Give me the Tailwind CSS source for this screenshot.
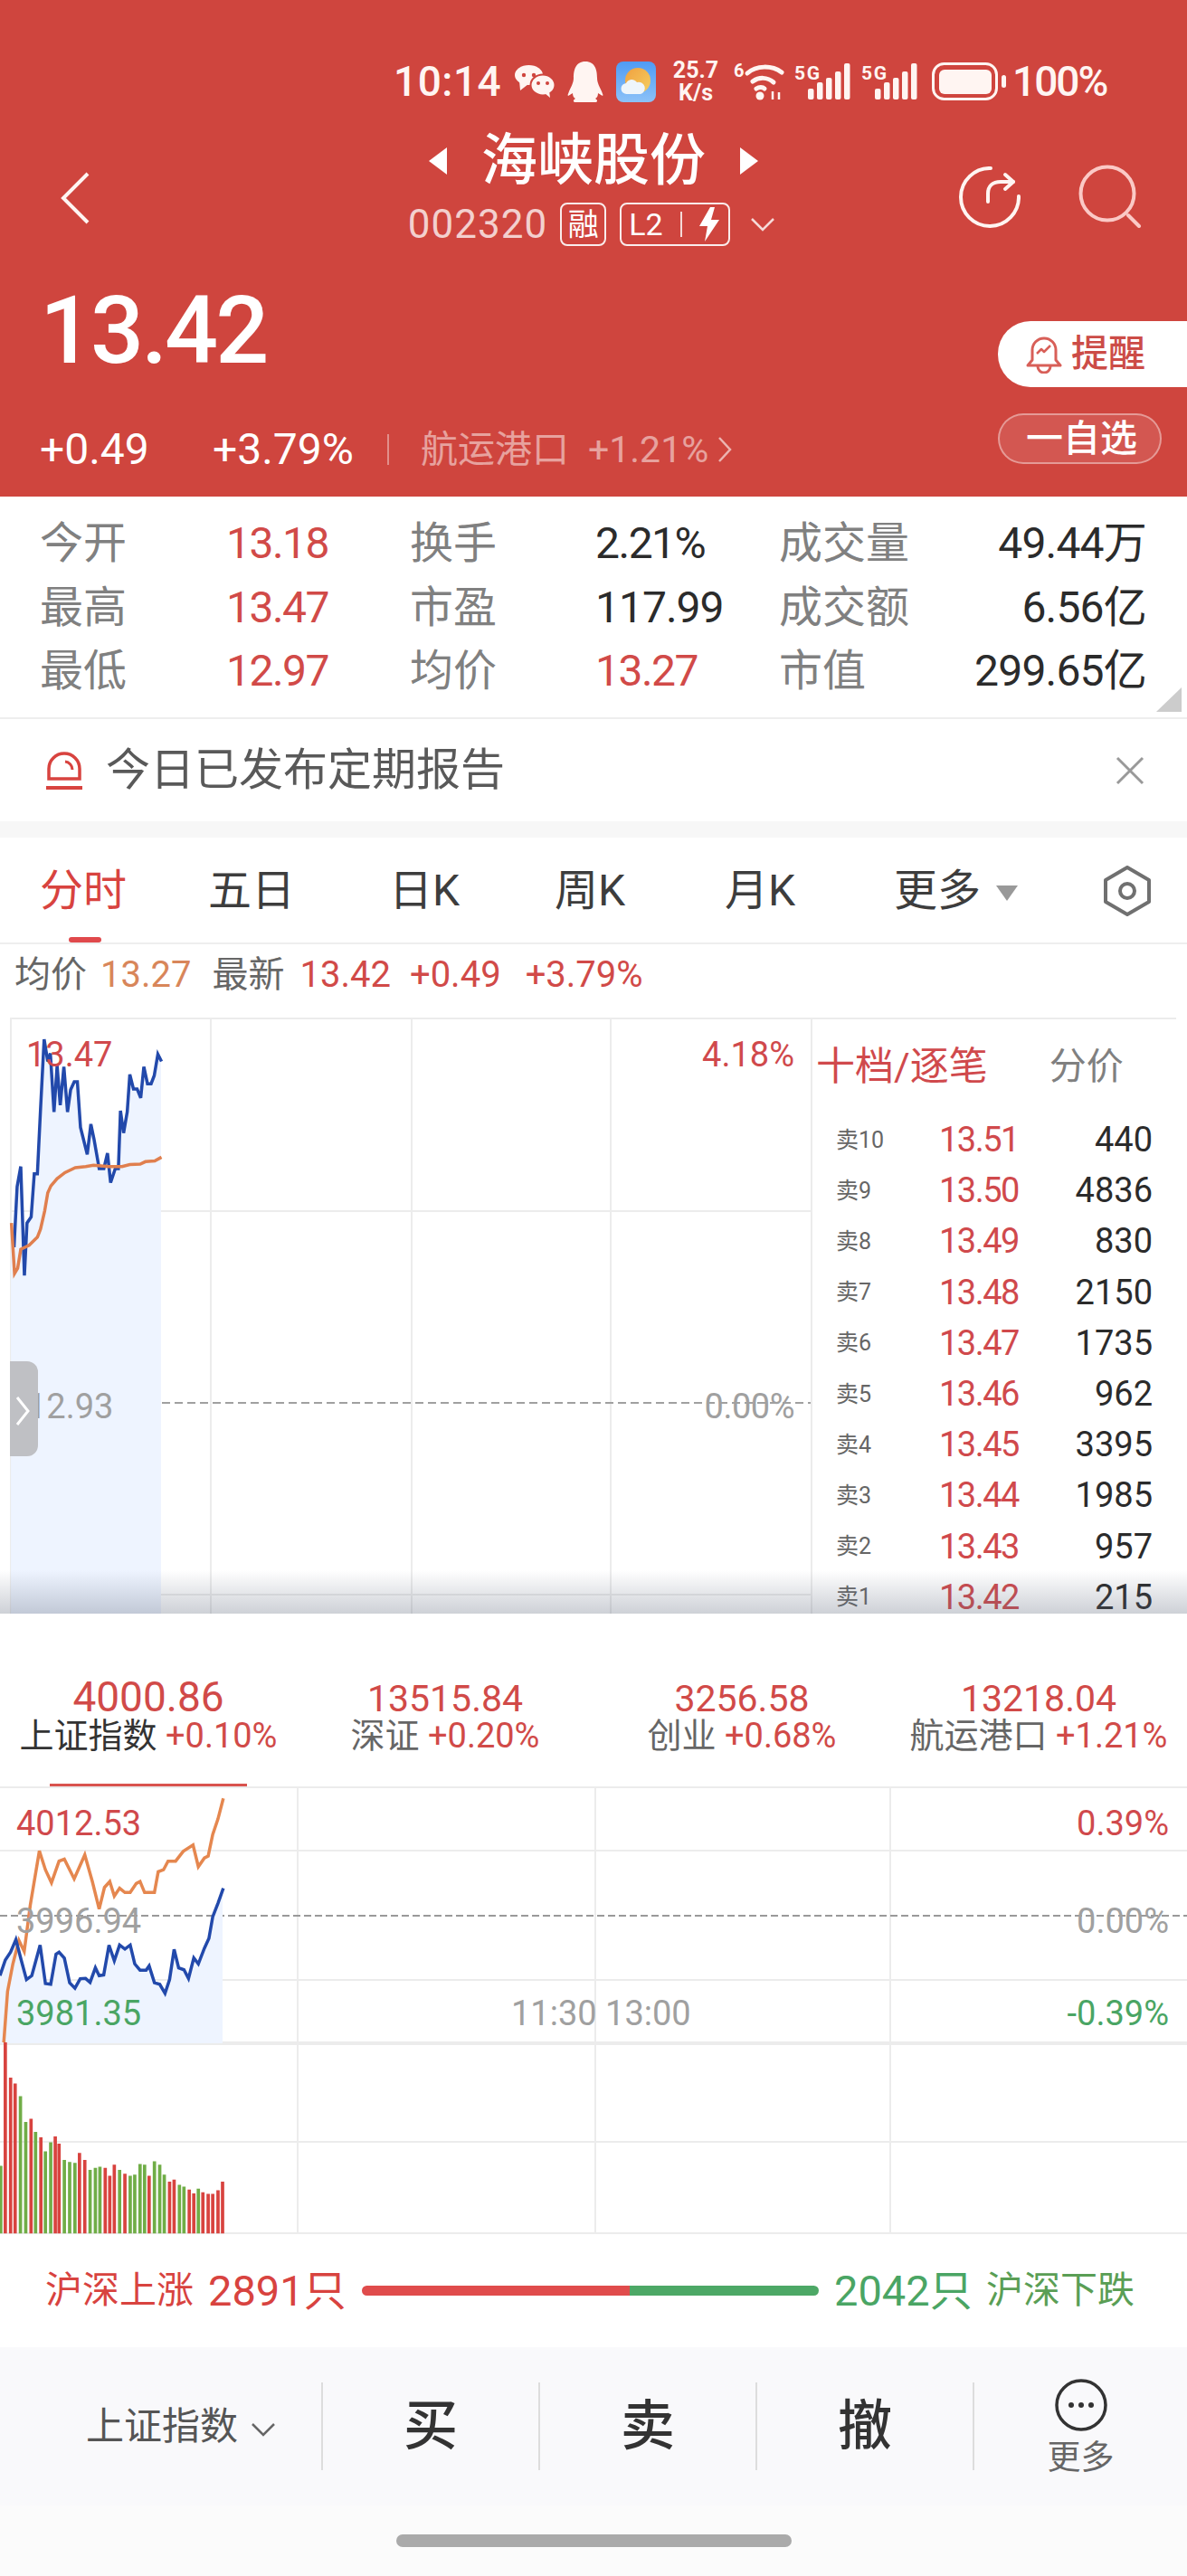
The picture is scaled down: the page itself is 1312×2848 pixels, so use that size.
<!DOCTYPE html>
<html lang="zh-CN">
<head>
    <meta charset="UTF-8">
    <title>海峡股份</title>
    <script src="https://cdn.jsdelivr.net/npm/@tailwindcss/browser@4"></script>
</head>
<body class="w-[1312px] h-[2848px] overflow-hidden bg-white font-['Roboto','Noto_Sans_CJK_SC',sans-serif]">

<!-- red header -->
<header class="h-[549px] pt-[66px] bg-[#cf453e] text-white">
    <div class="flex items-center h-[48px] pl-[435px] text-[#fff5f2]">
        <span class="w-[134px] text-[46px] leading-none font-medium tracking-[0.5px]">10:14</span>
        <svg class="w-[44px] h-[36px]" viewBox="0 0 44 36"><ellipse cx="15.5" cy="11" rx="15.5" ry="11" fill="#fff5f2"/><path d="M5 17l1 11 9-7z" fill="#fff5f2"/><ellipse cx="31" cy="22" rx="13.5" ry="11.5" fill="#fff5f2" stroke="#cf453e" stroke-width="2"/><path d="M33 31l6 5-1-8z" fill="#fff5f2"/><circle cx="10" cy="11" r="2.2" fill="#cf453e"/><circle cx="21" cy="11" r="2.2" fill="#cf453e"/><circle cx="26" cy="20" r="2" fill="#cf453e"/><circle cx="36" cy="20" r="2" fill="#cf453e"/></svg>
        <svg class="ml-[14px] w-[40px] h-[45px]" viewBox="0 0 40 45"><path d="M20 0C9 0 7 10 7 18c0 6-3 10-5 15-1 3-2 4-1 5l5-3c0 3 1 5 3 6-2 1-3 3-1 4h24c2-1 1-3-1-4 2-1 3-3 3-6l5 3c1-1 0-2-1-5-2-5-5-9-5-15C33 10 31 0 20 0z" fill="#fff5f2"/></svg>
        <svg class="ml-[14px] w-[44px] h-[45px]" viewBox="0 0 44 45">
            <defs>
                <linearGradient id="sky" x1="0" y1="0" x2="0" y2="1"><stop offset="0" stop-color="#4f9bf5"/><stop offset="1" stop-color="#8cc2f8"/></linearGradient>
                <linearGradient id="sun" x1="0" y1="0" x2="1" y2="1"><stop offset="0" stop-color="#f0a040"/><stop offset="1" stop-color="#f5cf60"/></linearGradient>
            </defs>
            <rect width="44" height="45" rx="8" fill="url(#sky)"/>
            <circle cx="24" cy="21" r="14" fill="url(#sun)"/>
            <path d="M12 36a6 6 0 0 1-1-12 7 7 0 0 1 12-1 6 6 0 0 1 4 13z" fill="#eef5fb"/>
        </svg>
        <div class="ml-[15px] w-[58px] flex flex-col items-center text-[25px] leading-[25px] font-bold"><span>25.7</span><span>K/s</span></div>
        <svg class="ml-[13px] w-[57px] h-[52px]" viewBox="0 -4 57 52" fill="none" stroke="#fff5f2" stroke-width="5" stroke-linecap="round"><path d="M15 13c10-9 27-9 38-1"/><path d="M21 22c7-5 16-5 23 1"/><path d="M25 30c3-2 7-2 9 0"/><circle cx="29" cy="38" r="4.5" fill="#fff5f2" stroke="none"/><path d="M43 42V33M50 34V42" stroke-width="2.5" stroke-linecap="butt"/><text x="0" y="17" font-size="20" font-weight="700" fill="#fff5f2" stroke="none">6</text></svg>
        <svg class="ml-[10px] w-[64px] h-[42px]" viewBox="0 0 64 42" fill="#fff5f2"><text x="0" y="19" font-size="21" font-weight="700" textLength="28">5G</text><rect x="15" y="29" width="6.5" height="12" rx="2"/><rect x="25" y="22" width="6.5" height="19" rx="2"/><rect x="35" y="17" width="6.5" height="24" rx="2"/><rect x="45" y="10" width="6.5" height="31" rx="2"/><rect x="55" y="1" width="6.5" height="40" rx="2"/></svg>
        <svg class="ml-[10px] w-[64px] h-[42px]" viewBox="0 0 64 42" fill="#fff5f2"><text x="0" y="19" font-size="21" font-weight="700" textLength="28">5G</text><rect x="15" y="29" width="6.5" height="12" rx="2"/><rect x="25" y="22" width="6.5" height="19" rx="2"/><rect x="35" y="17" width="6.5" height="24" rx="2"/><rect x="45" y="10" width="6.5" height="31" rx="2"/><rect x="55" y="1" width="6.5" height="40" rx="2"/></svg>
        <svg class="ml-[14px] w-[83px] h-[42px]" viewBox="0 0 83 42"><rect x="1.5" y="1.5" width="70" height="39" rx="12" fill="none" stroke="#fff5f2" stroke-width="3"/><rect x="8" y="8" width="58" height="27" rx="6" fill="#fff5f2"/><rect x="77" y="14" width="5" height="14" rx="2.5" fill="#fff5f2"/></svg>
        <span class="ml-[6px] text-[46px] leading-none font-medium tracking-[-2px]">100%</span>
    </div>

    <div class="grid grid-cols-[1fr_auto_1fr] mt-[32px]">
        <div class="pl-[66px] pt-[44px]">
            <svg class="w-[34px] h-[58px]" viewBox="0 0 34 58" fill="none" stroke="#fff5f2" stroke-width="4"><path d="M31 2L4 29l27 27"/></svg>
        </div>
        <div class="flex flex-col items-center">
            <div class="flex items-center h-[62px] gap-[38px] mt-[1px]">
                <span class="w-0 h-0 border-y-[15px] border-y-transparent border-r-[20px] border-r-white"></span>
                <span class="text-[62px] leading-none font-medium">海峡股份</span>
                <span class="w-0 h-0 border-y-[15px] border-y-transparent border-l-[20px] border-l-white"></span>
            </div>
            <div class="flex items-center h-[48px] mt-[15px] ml-[-4px]">
                <span class="text-[44px] leading-none tracking-[1px] text-white/75">002320</span>
                <span class="ml-[14px] w-[51px] h-[48px] flex items-center justify-center rounded-[8px] border-2 border-white/90 text-[34px] leading-none">融</span>
                <span class="ml-[15px] w-[122px] h-[48px] flex items-center rounded-[8px] border-2 border-white/90 pl-[8px]">
                    <span class="text-[34px] leading-none">L2</span>
                    <span class="ml-[19px] w-[2px] h-[28px] bg-white/80"></span>
                    <svg class="ml-[17px] w-[26px] h-[38px]" viewBox="0 0 26 38"><path d="M14 0L2 21h9L8 38l16-24h-9l4-14z" fill="#fff"/></svg>
                </span>
                <svg class="ml-[22px] w-[28px] h-[16px]" viewBox="0 0 28 16" fill="none" stroke="#fff" stroke-opacity=".8" stroke-width="2.5"><path d="M2 2l12 12L26 2"/></svg>
            </div>
        </div>
        <div class="flex justify-end gap-[62px] pr-[50px] pt-[38px]">
            <svg class="w-[68px] h-[68px]" viewBox="0 0 68 68" fill="none" stroke="#fff5f2" stroke-width="4" stroke-linecap="round" stroke-linejoin="round"><path d="M35 2A32 32 0 1 0 66 33"/><path d="M32 39v-9c0-8 5-13 14-13h14"/><path d="M51 9l9 8-9 8"/></svg>
            <svg class="w-[72px] h-[72px] -mt-[4px]" viewBox="0 0 72 72" fill="none" stroke="#fbc9c6" stroke-width="4" stroke-linecap="round"><circle cx="34" cy="34" r="29.5"/><path d="M57 58l12 12"/></svg>
        </div>
    </div>

    <div class="flex justify-between mt-[39px]">
        <div class="pl-[44px]">
            <div class="text-[104px] leading-[110px] tracking-[-3px] font-medium">13.42</div>
            <div class="flex items-center h-[46px] mt-[53px] leading-none">
                <span class="w-[191px] text-[48px]">+0.49</span>
                <span class="w-[193px] text-[48px]">+3.79%</span>
                <span class="w-[2px] h-[34px] bg-white/40"></span>
                <span class="ml-[35px] text-[41px] text-white/50">航运港口</span>
                <span class="ml-[21px] text-[41px] text-white/50">+1.21%</span>
                <svg class="ml-[10px] w-[16px] h-[30px]" viewBox="0 0 16 30" fill="none" stroke="#fff" stroke-opacity=".6" stroke-width="2.5"><path d="M2 2l12 13L2 28"/></svg>
            </div>
        </div>
        <div class="flex flex-col items-end pt-[44px]">
            <div class="flex items-center w-[209px] h-[73px] rounded-l-[36px] bg-white pl-[31px] text-[#cc4c47]">
                <svg class="w-[40px] h-[42px]" viewBox="0 0 40 42" fill="none" stroke="#d85f58" stroke-width="3" stroke-linejoin="round"><path d="M7 27V16a13 13 0 0 1 26 0v11l5 6H2z"/><path d="M13 34a7 7 0 0 0 14 0"/><path d="M12 20l5-5 3 3 7-7" stroke-width="2.5"/></svg>
                <span class="ml-[10px] text-[41px] leading-none font-medium">提醒</span>
            </div>
            <div class="flex items-center w-[181px] h-[56px] mt-[29px] mr-[28px] pl-[29px] rounded-full border-2 border-white/40 bg-white/10 text-[41px] leading-none font-medium whitespace-nowrap">一自选</div>
        </div>
    </div>
</header>

<!-- quote stats -->
<section class="relative h-[246px] pt-[17px] pl-[44px] pr-[45px] border-b-2 border-[#eeeeee] leading-none">
    <div class="grid grid-cols-[206px_203px_205px_203px_1fr_auto] auto-rows-[70.5px] items-center text-[48px] text-[#808080]">
        <span>今开</span><span class="text-[#d14a48] tracking-[-1.5px]">13.18</span><span>换手</span><span class="text-[#2b2b2b] tracking-[-1.5px]">2.21%</span><span>成交量</span><span class="text-right text-[#2b2b2b] tracking-[-0.8px]">49.44万</span>
        <span>最高</span><span class="text-[#d14a48] tracking-[-1.5px]">13.47</span><span>市盈</span><span class="text-[#2b2b2b] tracking-[-1px]">117.99</span><span>成交额</span><span class="text-right text-[#2b2b2b] tracking-[-0.8px]">6.56亿</span>
        <span>最低</span><span class="text-[#d14a48] tracking-[-1.5px]">12.97</span><span>均价</span><span class="text-[#d14a48] tracking-[-1.5px]">13.27</span><span>市值</span><span class="text-right text-[#2b2b2b] tracking-[-0.8px]">299.65亿</span>
    </div>
    <span class="absolute right-[6px] bottom-[6px] w-0 h-0 border-l-[28px] border-l-transparent border-b-[27px] border-b-[#cccccc]"></span>
</section>

<!-- notice -->
<section class="flex items-center justify-between h-[113px] pl-[50px] pr-[47px]">
    <div class="flex items-center">
        <svg class="w-[42px] h-[44px]" viewBox="0 0 42 44" fill="none" stroke="#d8433f" stroke-width="3.5"><path d="M4 31V20a17 17 0 0 1 34 0v11z"/><path d="M22 12a9 9 0 0 1 8 9" stroke-width="3"/><path d="M1 41h40" stroke-width="4"/></svg>
        <span class="ml-[25px] text-[49px] leading-none text-[#595959]">今日已发布定期报告</span>
    </div>
    <svg class="w-[32px] h-[32px]" viewBox="0 0 32 32" stroke="#999" stroke-width="3"><path d="M2 2l28 28M30 2L2 30"/></svg>
</section>
<div class="h-[18px] bg-[#f7f7f7]"></div>

<!-- period tabs -->
<nav class="relative grid grid-cols-[186px_200px_183px_188px_187px_230px_auto] items-center h-[116px] pt-[2px] pl-[44px] text-[48px] leading-none text-[#3d3d3d]">
    <span class="text-[#d8433f]">分时</span>
    <span>五日</span>
    <span>日K</span>
    <span>周K</span>
    <span>月K</span>
    <span class="flex items-center">更多<span class="ml-[17px] mt-[4px] w-0 h-0 border-x-[12px] border-x-transparent border-t-[17px] border-t-[#999999]"></span></span>
    <svg class="ml-[2px] w-[52px] h-[56px]" viewBox="0 0 52 56" fill="none" stroke="#707070" stroke-width="4"><path d="M26 2l24 14v24L26 54 2 40V16z" stroke-linejoin="round"/><circle cx="26" cy="28" r="8"/></svg>
    <span class="absolute left-[76px] bottom-0 w-[36px] h-[6px] rounded-full bg-[#e0494c]"></span>
</nav>
<div class="h-[2px] bg-[#eeeeee]"></div>

<div class="flex items-center h-[68px] pl-[16px] text-[40px] leading-none">
    <span class="text-[#666666]">均价</span>
    <span class="ml-[15px] text-[#d8865a]">13.27</span>
    <span class="ml-[23px] text-[#666666]">最新</span>
    <span class="ml-[17px] text-[#d14a48]">13.42</span>
    <span class="ml-[21px] text-[#d14a48]">+0.49</span>
    <span class="ml-[27px] text-[#d14a48]">+3.79%</span>
</div>
<div class="h-[13px]"></div>

<!-- intraday chart with order book -->
<section class="relative flex h-[659px]">
    <div class="relative w-[896px] h-full">
        <svg class="absolute inset-0 w-[896px] h-[659px]" viewBox="0 0 896 659" fill="none">
            <path d="M11 1H896M11 214H896M11 638H896" stroke="#ececec" stroke-width="2"/>
            <path d="M12 0V659M233 0V659M455 0V659M675 0V659" stroke="#ececec" stroke-width="2"/>
            <path d="M11 426H896" stroke="#a0a0a0" stroke-width="2" stroke-dasharray="9 5"/>
        </svg>
        <svg class="absolute left-0 top-[-5px] w-[900px] h-[664px]" viewBox="0 0 1568 1487" preserveAspectRatio="none" fill="none">
            <path d="M21 520L27 580 33 430 40 380 47 650 52 520 60 505 66 398 72 398 78 240 85 65 92 120 97 100 104 245 110 130 116 228 123 133 130 245 136 190 143 170 149 170 155 283 168 350 175 275 181 312 191 385 200 385 207 347 213 420 222 385 228 385 232 242 238 297 245 245 250 152 257 188 264 188 271 210 277 133 284 175 291 175 297 155 304 102 310 120V1487H21Z" fill="#eef4ff"/>
            <path d="M27 580L33 430 40 380 47 650 52 520 60 505 66 398 72 398 78 240 85 65 92 120 97 100 104 245 110 130 116 228 123 133 130 245 136 190 143 170 149 170 155 283 168 350 175 275 181 312 191 385 200 385 207 347 213 420 222 385 228 385 232 242 238 297 245 245 250 152 257 188 264 188 271 210 277 133 284 175 291 175 297 155 304 102 311 120" stroke="#2249ab" stroke-width="3.5" vector-effect="non-scaling-stroke"/>
            <path d="M22 520L28 645 34 632 40 585 48 580 56 575 72 555 78 535 86 490 92 445 98 428 110 410 125 395 145 383 165 380 180 377 210 380 235 380 250 375 270 374 280 368 298 366 311 357" stroke="#e07f4e" stroke-width="3.5" vector-effect="non-scaling-stroke"/>
        </svg>
        <span class="absolute left-[29px] top-[22px] text-[38px] leading-none text-[#d0494c]">13.47</span>
        <span class="absolute right-[18px] top-[22px] text-[38px] leading-none text-[#d0494c]">4.18%</span>
        <span class="absolute left-[30px] top-[411px] text-[38px] leading-none text-[#a0a0a0]">12.93</span>
        <span class="absolute right-[18px] top-[411px] text-[38px] leading-none tracking-[-0.5px] text-[#a0a0a0]">0.00%</span>
        <div class="absolute left-[11px] top-[380px] w-[31px] h-[105px] rounded-r-[12px] bg-[#bfc0c4] flex items-center">
            <svg class="w-[16px] h-[34px] ml-[6px] mt-[4px]" viewBox="0 0 16 34" fill="none" stroke="#fff" stroke-width="3"><path d="M2 2l12 15L2 32"/></svg>
        </div>
    </div>

    <div class="flex-1 border-t-2 border-l-2 border-[#ececec] mr-[12px]">
        <div class="flex items-center h-[105px] pl-[4px] leading-none">
            <span class="text-[43px] text-[#d0494c] whitespace-nowrap">十档/逐笔</span>
            <span class="ml-[68px] text-[41px] text-[#808080]">分价</span>
        </div>
        <div class="grid grid-cols-[114px_1fr_auto] auto-rows-[56.2px] items-center pl-[26px] pr-[26px] text-[38px] leading-none text-[#2b2b2b]">
            <span class="text-[25px] text-[#666666]">卖10</span><span class="text-[#d0494c] tracking-[-1.5px]">13.51</span><span class="text-right">440</span>
            <span class="text-[25px] text-[#666666]">卖9</span><span class="text-[#d0494c] tracking-[-1.5px]">13.50</span><span class="text-right">4836</span>
            <span class="text-[25px] text-[#666666]">卖8</span><span class="text-[#d0494c] tracking-[-1.5px]">13.49</span><span class="text-right">830</span>
            <span class="text-[25px] text-[#666666]">卖7</span><span class="text-[#d0494c] tracking-[-1.5px]">13.48</span><span class="text-right">2150</span>
            <span class="text-[25px] text-[#666666]">卖6</span><span class="text-[#d0494c] tracking-[-1.5px]">13.47</span><span class="text-right">1735</span>
            <span class="text-[25px] text-[#666666]">卖5</span><span class="text-[#d0494c] tracking-[-1.5px]">13.46</span><span class="text-right">962</span>
            <span class="text-[25px] text-[#666666]">卖4</span><span class="text-[#d0494c] tracking-[-1.5px]">13.45</span><span class="text-right">3395</span>
            <span class="text-[25px] text-[#666666]">卖3</span><span class="text-[#d0494c] tracking-[-1.5px]">13.44</span><span class="text-right">1985</span>
            <span class="text-[25px] text-[#666666]">卖2</span><span class="text-[#d0494c] tracking-[-1.5px]">13.43</span><span class="text-right">957</span>
            <span class="text-[25px] text-[#666666]">卖1</span><span class="text-[#d0494c] tracking-[-1.5px]">13.42</span><span class="text-right">215</span>
        </div>
    </div>
    <div class="absolute left-0 right-0 bottom-0 h-[48px] bg-gradient-to-b from-transparent to-[#5a6478]/30"></div>
</section>

<!-- index tabs -->
<section class="relative grid grid-cols-4 h-[191px] pt-[69px] bg-white">
    <div class="flex flex-col items-center">
        <span class="h-[46px] text-[46px] leading-[46px] text-[#d14a48]">4000.86</span>
        <span class="h-[40px] text-[38px] leading-[40px] text-[#333333] whitespace-nowrap">上证指数 <span class="text-[#d14a48]">+0.10%</span></span>
    </div>
    <div class="flex flex-col items-center">
        <span class="h-[46px] text-[41px] leading-[50px] text-[#d14a48]">13515.84</span>
        <span class="h-[40px] text-[38px] leading-[40px] text-[#666666] whitespace-nowrap">深证 <span class="text-[#d14a48]">+0.20%</span></span>
    </div>
    <div class="flex flex-col items-center">
        <span class="h-[46px] text-[41px] leading-[50px] text-[#d14a48]">3256.58</span>
        <span class="h-[40px] text-[38px] leading-[40px] text-[#666666] whitespace-nowrap">创业 <span class="text-[#d14a48]">+0.68%</span></span>
    </div>
    <div class="flex flex-col items-center">
        <span class="h-[46px] text-[41px] leading-[50px] text-[#d14a48]">13218.04</span>
        <span class="h-[40px] text-[38px] leading-[40px] text-[#666666] whitespace-nowrap">航运港口 <span class="text-[#d14a48]">+1.21%</span></span>
    </div>
    <span class="absolute left-[55px] bottom-0 w-[218px] h-[3px] bg-[#d9534f]"></span>
</section>

<!-- index chart -->
<section class="relative h-[495px]">
    <svg class="absolute inset-0 w-[1312px] h-[495px]" viewBox="0 0 1312 495" fill="none">
        <path d="M0 1H1312M0 71H1312M0 214H1312M0 393H1312M0 494H1312" stroke="#ececec" stroke-width="2"/>
        <path d="M0 284H1312" stroke="#ececec" stroke-width="4"/>
        <path d="M329 0V495M658 0V495M984 0V495" stroke="#ececec" stroke-width="2"/>
        <path d="M0 143H1312" stroke="#999999" stroke-width="2" stroke-dasharray="8 4"/>
    </svg>
    <svg class="absolute left-0 top-[-155px] w-[1312px] h-[680px]" viewBox="0 0 1568 1568" preserveAspectRatio="none" fill="none">
        <path d="M0 840L7 800 14 780 21 748 28 800 35 850 42 840 53 762 60 860 67 862 74 785 78 780 85 795 92 858 99 872 106 848 113 847 119 857 126 820 131 840 137 838 144 762 151 802 158 762 165 772 172 762 178 810 185 826 193 826 197 815 204 858 211 862 218 885 224 850 230 773 236 820 243 825 249 847 256 795 262 810 270 770 276 745 281 690 288 655 294 617V1012H0Z" fill="#eef4ff"/>
        <path d="M7 1010V1497M14 1100V1497M20 1115V1497M41 1205V1497M54 1252V1497M73 1250V1497M78 1268V1497M105 1292V1497M112 1310V1497M139 1330V1497M145 1350V1497M151 1322V1497M165 1345V1497M197 1350V1497M224 1365V1497M230 1360V1497M250 1385V1497M256 1395V1497M268 1392V1497M275 1396V1497M281 1396V1497M288 1387V1497M294 1365V1497" stroke="#d8433f" stroke-width="4.4"/>
        <path d="M1 1325V1497M27 1147V1497M34 1213V1497M47 1238V1497M60 1288V1497M67 1265V1497M85 1310V1497M92 1315V1497M99 1317V1497M119 1335V1497M126 1330V1497M132 1327V1497M158 1335V1497M172 1350V1497M178 1347V1497M185 1320V1497M191 1322V1497M204 1313V1497M211 1322V1497M217 1347V1497M237 1373V1497M243 1378V1497M262 1383V1497" stroke="#70ad47" stroke-width="4.4"/>
        <path d="M5 1010L10 880 17 810 25 750 32 778 40 660 52 522 60 570 68 603 78 548 85 543 98 593 112 532 122 600 131 670 138 615 145 600 151 637 158 617 165 628 172 628 180 605 185 600 191 628 204 628 209 575 216 570 222 548 232 548 242 523 255 507 262 562 270 540 275 535 281 480 288 440 295 388" stroke="#e5874f" stroke-width="3.5" vector-effect="non-scaling-stroke"/>
        <path d="M0 840L7 800 14 780 21 748 28 800 35 850 42 840 53 762 60 860 67 862 74 785 78 780 85 795 92 858 99 872 106 848 113 847 119 857 126 820 131 840 137 838 144 762 151 802 158 762 165 772 172 762 178 810 185 826 193 826 197 815 204 858 211 862 218 885 224 850 230 773 236 820 243 825 249 847 256 795 262 810 270 770 276 745 281 690 288 655 295 617" stroke="#2249ab" stroke-width="3.5" vector-effect="non-scaling-stroke"/>
    </svg>
    <span class="absolute left-[18px] top-[22px] text-[38px] leading-none text-[#d0494c]">4012.53</span>
    <span class="absolute right-[20px] top-[22px] text-[38px] leading-none text-[#d0494c]">0.39%</span>
    <span class="absolute left-[18px] top-[130px] text-[38px] leading-none text-[#a0a0a0]">3996.94</span>
    <span class="absolute right-[20px] top-[130px] text-[38px] leading-none text-[#a0a0a0]">0.00%</span>
    <span class="absolute left-[18px] top-[232px] text-[38px] leading-none text-[#4aa564]">3981.35</span>
    <span class="absolute left-[565px] top-[232px] text-[38px] leading-none text-[#a0a0a0]">11:30 13:00</span>
    <span class="absolute right-[20px] top-[232px] text-[38px] leading-none text-[#4aa564]">-0.39%</span>
</section>

<!-- advance / decline -->
<section class="flex items-center h-[125px] pl-[50px] leading-none">
    <span class="w-[180px] text-[41px] text-[#d8433f]">沪深上涨</span>
    <span class="w-[170px] text-[47px] text-[#d8433f]">2891只</span>
    <div class="flex w-[505px] h-[11px] rounded-full overflow-hidden">
        <span class="w-[296px] bg-[#e04c4c]"></span>
        <span class="flex-1 bg-[#4da866]"></span>
    </div>
    <span class="ml-[17px] w-[168px] text-[47px] text-[#4aa564]">2042只</span>
    <span class="text-[41px] text-[#5a9e55]">沪深下跌</span>
</section>

<!-- action bar -->
<section class="grid grid-cols-[357px_240px_240px_240px_1fr] items-center h-[175px] bg-[#f9f9fb]">
    <div class="flex items-center h-[97px] pl-[95px] border-r-2 border-[#dddddd]">
        <span class="text-[42px] leading-none text-[#555555]">上证指数</span>
        <svg class="ml-[14px] mt-[6px] w-[28px] h-[16px]" viewBox="0 0 28 16" fill="none" stroke="#666" stroke-width="2.5"><path d="M2 2l12 12L26 2"/></svg>
    </div>
    <div class="flex items-center justify-center h-[97px] border-r-2 border-[#dddddd] text-[60px] leading-none font-medium text-[#333333]">买</div>
    <div class="flex items-center justify-center h-[97px] border-r-2 border-[#dddddd] text-[60px] leading-none font-medium text-[#333333]">卖</div>
    <div class="flex items-center justify-center h-[97px] border-r-2 border-[#dddddd] text-[60px] leading-none font-medium text-[#333333]">撤</div>
    <div class="flex flex-col items-center">
        <svg class="w-[58px] h-[58px]" viewBox="0 0 58 58" fill="none"><circle cx="29" cy="29" r="27" stroke="#333" stroke-width="3.5"/><circle cx="18" cy="29" r="3" fill="#333"/><circle cx="29" cy="29" r="3" fill="#333"/><circle cx="40" cy="29" r="3" fill="#333"/></svg>
        <span class="mt-[11px] text-[37px] leading-none text-[#666666]">更多</span>
    </div>
</section>

<footer class="h-[78px] pt-[32px] bg-[#fbfbfb]">
    <div class="w-[437px] h-[14px] mx-auto rounded-full bg-[#aaaaaa]"></div>
</footer>

</body>
</html>
